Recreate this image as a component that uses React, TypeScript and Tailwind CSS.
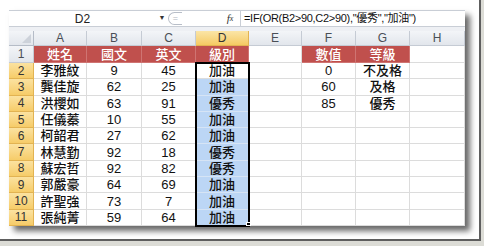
import React from "react";

const W: string[] = ["w-[53px]", "w-[55px]", "w-[54px]", "w-[53px]", "w-[53px]", "w-[54px]", "w-[54px]", "w-[55px]"];
const COLS = ["A", "B", "C", "D", "E", "F", "G", "H"];

const rows: string[][] = [
  ["李雅紋", "9", "45", "加油", "", "0", "不及格", ""],
  ["龔佳旋", "62", "25", "加油", "", "60", "及格", ""],
  ["洪櫻如", "63", "91", "優秀", "", "85", "優秀", ""],
  ["任儀蓁", "10", "55", "加油", "", "", "", ""],
  ["柯韶君", "27", "62", "加油", "", "", "", ""],
  ["林慧勤", "92", "18", "優秀", "", "", "", ""],
  ["蘇宏哲", "92", "82", "優秀", "", "", "", ""],
  ["郭嚴豪", "64", "69", "加油", "", "", "", ""],
  ["許聖強", "73", "7", "加油", "", "", "", ""],
  ["張純菁", "59", "64", "加油", "", "", "", ""],
];

const header = ["姓名", "國文", "英文", "級別", "", "數值", "等級", ""];

export default function App() {
  return (
    <div className="w-[484px] h-[246px] bg-[#dcdcd6] overflow-hidden font-['Liberation_Sans','Noto_Sans_CJK_TC',sans-serif]">
      <div className="w-[481px] h-[241px] bg-white border-r-2 border-b-2 border-[#5e5e5e] pt-[10px] pl-[9px]">
        <div className="relative w-[456px] h-[216px] bg-white shadow-[5px_5px_6px_rgba(0,0,0,0.6)]">
          {/* formula bar */}
          <div className="flex h-[17px] border-t border-b border-[#c9ced6] bg-white">
            <div className="w-[147px] flex items-center justify-center text-[12px] text-[#222] leading-none">D2</div>
            <div className="w-[12px] flex items-center justify-center text-[7px] text-[#333]">▼</div>
            <div className="w-[16px] flex items-center">
              <div className="w-[14px] h-[13px] rounded-l-full border border-r-0 border-[#b8bec8] flex items-center justify-center text-[9px] text-[#b0b6c0] leading-none">=</div>
            </div>
            <div className="flex-1" />
            <div className="w-[20px] flex items-center justify-center text-[11px] italic font-['Liberation_Serif',serif] text-[#333] leading-none">
              f<span className="text-[8px]">x</span>
            </div>
            <div className="w-[225px] border-l border-[#c9ced6] pl-[3px] flex items-center text-[11px] text-[#111] leading-none whitespace-nowrap tracking-[-0.3px]">
              =IF(OR(B2&gt;90,C2&gt;90),"優秀","加油")
            </div>
          </div>
          <div className="h-[4px] bg-[#eef0f4]" />
          {/* column header row */}
          <div className="flex h-[15px]">
            <div className="w-[25px] bg-gradient-to-b from-[#f3f5f8] to-[#e2e6ec] border-r border-b border-[#b5bcc7] relative">
              <div className="absolute right-[2px] bottom-[2px] w-0 h-0 border-l-[9px] border-l-transparent border-b-[9px] border-b-[#cdd2da]" />
            </div>
            {COLS.map((c, i) => (
              <div
                key={c}
                className={`${W[i]} flex items-center justify-center text-[12px] leading-none border-r border-b ${
                  i === 3
                    ? "bg-gradient-to-b from-[#fbe5a6] to-[#f5ca62] border-[#e2b352] text-[#333]"
                    : "bg-gradient-to-b from-[#f3f5f8] to-[#e2e6ec] border-[#c5cbd4] text-[#4a4f57]"
                }`}
              >
                {c}
              </div>
            ))}
          </div>
          {/* row 1 */}
          <div className="flex h-[17px]">
            <div className="w-[25px] flex items-center justify-center text-[12px] leading-none bg-gradient-to-b from-[#f3f5f8] to-[#e2e6ec] border-r border-b border-[#c5cbd4] text-[#4a4f57]">
              1
            </div>
            {header.map((h, i) => {
              const red = h !== "";
              return (
                <div
                  key={i}
                  className={`${W[i]} flex items-center justify-center text-[13px] font-medium leading-none border-r border-b ${
                    red ? "bg-[#c0504d] text-white border-[#cf7472]" : "bg-white border-[#dcdcdc]"
                  }`}
                >
                  {h}
                </div>
              );
            })}
          </div>
          {/* data rows */}
          {rows.map((r, ri) => (
            <div key={ri} className="flex h-[16.3px]">
              <div className="w-[25px] flex items-center justify-center text-[12px] leading-none bg-gradient-to-b from-[#fbe2a0] to-[#f6cc68] border-r border-b border-[#e2b352] text-[#333]">
                {ri + 2}
              </div>
              {r.map((v, ci) => {
                const blue = ci === 3 && ri > 0;
                return (
                  <div
                    key={ci}
                    className={`${W[ci]} flex items-center justify-center text-[13px] font-medium leading-none text-[#111] border-r border-b ${
                      blue ? "bg-[#bcd6f5] border-[#d6e4f5]" : "bg-white border-[#dcdcdc]"
                    }`}
                  >
                    {v}
                  </div>
                );
              })}
            </div>
          ))}
          {/* selection border */}
          <div className="absolute left-[186px] top-[52px] w-[55px] h-[165px] border-2 border-black pointer-events-none" />
          <div className="absolute left-[237px] top-[212px] w-[5px] h-[4px] bg-black border border-white" />
        </div>
      </div>
    </div>
  );
}
